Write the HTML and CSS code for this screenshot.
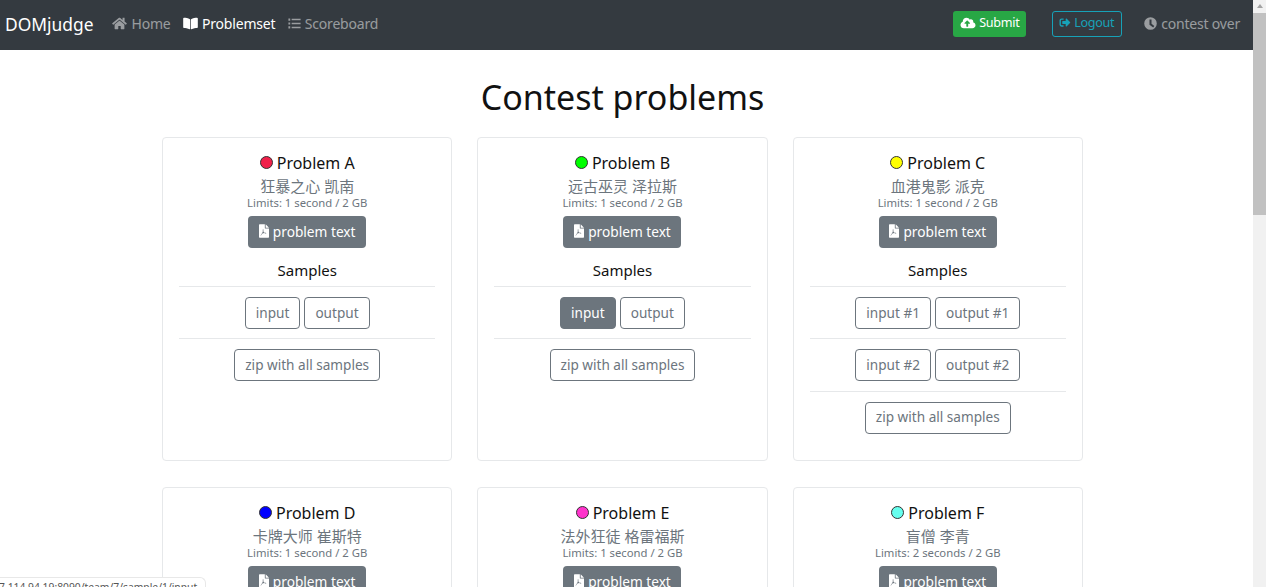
FILE: index.html
```html
<!DOCTYPE html>
<html lang="zh">
<head>
<meta charset="utf-8">
<title>Contest problems</title>
<link rel="stylesheet" href="styles.css">
</head>
<body>
<div class="page">
  <nav class="navbar">
    <a class="brand">DOMjudge</a>
    <ul class="nav-links">
      <li class="nav-link"><svg class="icon i-home" viewBox="0 0 576 512"><path d="M280 148 96 300v164c0 9 7 16 16 16l112 0c9 0 16-7 16-16v-96c0-9 7-16 16-16h64c9 0 16 7 16 16v96c0 9 7 16 16 16l112 0c9 0 16-7 16-16V300L296 148c-4-4-12-4-16 0zM572 251l-84-69V44c0-7-5-12-12-12h-56c-7 0-12 5-12 12v72l-89-74c-18-14-44-14-62 0L4 251c-5 4-6 12-2 17l26 31c4 5 12 6 17 2L280 107c4-4 12-4 16 0l235 194c5 4 13 3 17-2l26-31c4-5 3-13-2-17z"/></svg>Home</li>
      <li class="nav-link active"><svg class="icon i-book" viewBox="0 0 576 512"><path d="M542 32c-55 3-164 15-232 56-5 3-8 8-8 14v362c0 11 13 19 24 14 69-35 170-44 220-47 17-1 30-14 30-30V62c0-18-16-31-34-30zM34 32c55 3 164 15 232 56 5 3 8 8 8 14v362c0 11-13 19-24 14-69-35-170-44-220-47-17-1-30-14-30-30V62c0-18 16-31 34-30z"/></svg>Problemset</li>
      <li class="nav-link"><svg class="icon i-list" viewBox="0 0 512 512"><path d="M16 56h72v88H16zM16 212h72v88H16zM16 368h72v88H16zM144 72h352v56H144zM144 228h352v56H144zM144 384h352v56H144z"/></svg>Scoreboard</li>
    </ul>
    <div class="nav-actions">
      <a class="btn-submit"><svg class="icon i-cloud" viewBox="0 0 640 512"><path d="M537 226c4-10 7-22 7-34 0-53-43-96-96-96-20 0-38 6-53 16C367 64 315 32 256 32c-88 0-160 72-160 160 0 3 0 5 0 8C40 220 0 273 0 336c0 80 64 144 144 144h368c71 0 128-57 128-128 0-62-45-114-103-126zM393 284h-65v112c0 9-7 16-16 16h-48c-9 0-16-7-16-16V284h-65c-14 0-21-17-11-27l105-105c6-6 16-6 22 0l105 105c10 10 3 27-11 27z"/></svg>Submit</a>
      <a class="btn-logout"><svg class="icon i-logout" viewBox="0 0 512 512"><path d="M497 273 329 441c-15 15-41 4-41-17v-96H152c-13 0-24-11-24-24v-96c0-13 11-24 24-24h136V88c0-21 26-32 41-17l168 168c9 10 9 24 0 34zM192 436v-40c0-7-5-12-12-12H96c-18 0-32-14-32-32V160c0-18 14-32 32-32h84c7 0 12-5 12-12V76c0-7-5-12-12-12H96C43 64 0 107 0 160v192c0 53 43 96 96 96h84c7 0 12-5 12-12z"/></svg>Logout</a>
      <span class="contest-state"><svg class="icon i-clock" viewBox="0 0 512 512"><path fill-rule="evenodd" d="M256 8a248 248 0 1 0 0 496 248 248 0 0 0 0-496zM216 100h80v170l110 80-45 62-145-106z"/></svg>contest over</span>
    </div>
  </nav>

  <main class="content">
    <h1 class="page-title">Contest problems</h1>
    <div class="problem-grid">

      <section class="card">
        <h3 class="card-title"><span class="dot dot-a"></span>Problem A</h3>
        <div class="card-name">狂暴之心 凯南</div>
        <div class="limits">Limits: 1 second / 2 GB</div>
        <a class="btn-text"><svg class="icon i-pdf" viewBox="0 0 384 512"><path fill-rule="evenodd" d="M224 0H24C11 0 0 11 0 24v464c0 13 11 24 24 24h336c13 0 24-11 24-24V160H248c-13 0-24-11-24-24zM256 0v128h128zM60 420c30-16 60-70 88-150-6-30-8-60-2-72 8-10 22-6 24 12 1 14-1 34-5 58 12 24 28 44 44 56 26-4 54-4 66 6 10 10 4 22-10 22-18 0-40-8-62-22-26 6-58 16-84 28-18 34-34 62-48 68-8 4-16-2-11-6z"/></svg>problem text</a>
        <h4 class="samples-title">Samples</h4>
        <div class="sample-row"><a class="btn-sample">input</a><a class="btn-sample">output</a></div>
        <div class="sample-row"><a class="btn-sample">zip with all samples</a></div>
      </section>

      <section class="card">
        <h3 class="card-title"><span class="dot dot-b"></span>Problem B</h3>
        <div class="card-name">远古巫灵 泽拉斯</div>
        <div class="limits">Limits: 1 second / 2 GB</div>
        <a class="btn-text"><svg class="icon i-pdf" viewBox="0 0 384 512"><path fill-rule="evenodd" d="M224 0H24C11 0 0 11 0 24v464c0 13 11 24 24 24h336c13 0 24-11 24-24V160H248c-13 0-24-11-24-24zM256 0v128h128zM60 420c30-16 60-70 88-150-6-30-8-60-2-72 8-10 22-6 24 12 1 14-1 34-5 58 12 24 28 44 44 56 26-4 54-4 66 6 10 10 4 22-10 22-18 0-40-8-62-22-26 6-58 16-84 28-18 34-34 62-48 68-8 4-16-2-11-6z"/></svg>problem text</a>
        <h4 class="samples-title">Samples</h4>
        <div class="sample-row"><a class="btn-sample hover">input</a><a class="btn-sample">output</a></div>
        <div class="sample-row"><a class="btn-sample">zip with all samples</a></div>
      </section>

      <section class="card">
        <h3 class="card-title"><span class="dot dot-c"></span>Problem C</h3>
        <div class="card-name">血港鬼影 派克</div>
        <div class="limits">Limits: 1 second / 2 GB</div>
        <a class="btn-text"><svg class="icon i-pdf" viewBox="0 0 384 512"><path fill-rule="evenodd" d="M224 0H24C11 0 0 11 0 24v464c0 13 11 24 24 24h336c13 0 24-11 24-24V160H248c-13 0-24-11-24-24zM256 0v128h128zM60 420c30-16 60-70 88-150-6-30-8-60-2-72 8-10 22-6 24 12 1 14-1 34-5 58 12 24 28 44 44 56 26-4 54-4 66 6 10 10 4 22-10 22-18 0-40-8-62-22-26 6-58 16-84 28-18 34-34 62-48 68-8 4-16-2-11-6z"/></svg>problem text</a>
        <h4 class="samples-title">Samples</h4>
        <div class="sample-row"><a class="btn-sample">input #1</a><a class="btn-sample">output #1</a></div>
        <div class="sample-row"><a class="btn-sample">input #2</a><a class="btn-sample">output #2</a></div>
        <div class="sample-row"><a class="btn-sample">zip with all samples</a></div>
      </section>

      <section class="card">
        <h3 class="card-title"><span class="dot dot-d"></span>Problem D</h3>
        <div class="card-name">卡牌大师 崔斯特</div>
        <div class="limits">Limits: 1 second / 2 GB</div>
        <a class="btn-text"><svg class="icon i-pdf" viewBox="0 0 384 512"><path fill-rule="evenodd" d="M224 0H24C11 0 0 11 0 24v464c0 13 11 24 24 24h336c13 0 24-11 24-24V160H248c-13 0-24-11-24-24zM256 0v128h128zM60 420c30-16 60-70 88-150-6-30-8-60-2-72 8-10 22-6 24 12 1 14-1 34-5 58 12 24 28 44 44 56 26-4 54-4 66 6 10 10 4 22-10 22-18 0-40-8-62-22-26 6-58 16-84 28-18 34-34 62-48 68-8 4-16-2-11-6z"/></svg>problem text</a>
      </section>

      <section class="card">
        <h3 class="card-title"><span class="dot dot-e"></span>Problem E</h3>
        <div class="card-name">法外狂徒 格雷福斯</div>
        <div class="limits">Limits: 1 second / 2 GB</div>
        <a class="btn-text"><svg class="icon i-pdf" viewBox="0 0 384 512"><path fill-rule="evenodd" d="M224 0H24C11 0 0 11 0 24v464c0 13 11 24 24 24h336c13 0 24-11 24-24V160H248c-13 0-24-11-24-24zM256 0v128h128zM60 420c30-16 60-70 88-150-6-30-8-60-2-72 8-10 22-6 24 12 1 14-1 34-5 58 12 24 28 44 44 56 26-4 54-4 66 6 10 10 4 22-10 22-18 0-40-8-62-22-26 6-58 16-84 28-18 34-34 62-48 68-8 4-16-2-11-6z"/></svg>problem text</a>
      </section>

      <section class="card">
        <h3 class="card-title"><span class="dot dot-f"></span>Problem F</h3>
        <div class="card-name">盲僧 李青</div>
        <div class="limits">Limits: 2 seconds / 2 GB</div>
        <a class="btn-text"><svg class="icon i-pdf" viewBox="0 0 384 512"><path fill-rule="evenodd" d="M224 0H24C11 0 0 11 0 24v464c0 13 11 24 24 24h336c13 0 24-11 24-24V160H248c-13 0-24-11-24-24zM256 0v128h128zM60 420c30-16 60-70 88-150-6-30-8-60-2-72 8-10 22-6 24 12 1 14-1 34-5 58 12 24 28 44 44 56 26-4 54-4 66 6 10 10 4 22-10 22-18 0-40-8-62-22-26 6-58 16-84 28-18 34-34 62-48 68-8 4-16-2-11-6z"/></svg>problem text</a>
      </section>

    </div>
  </main>
</div>

<div class="scrollbar"><span class="scroll-arrow"></span><span class="scroll-thumb"></span></div>
<div class="status-bubble"><span class="status-url">7.114.94.19:8090/team/7/sample/1/input</span></div>
</body>
</html>
```

FILE: styles.css
```css
* { box-sizing: border-box; }
html, body { margin: 0; height: 100%; overflow: hidden; background: #fff; }
body {
  font-family: "Noto Sans", "Noto Sans CJK SC", sans-serif;
  color: #212529;
  width: 1266px;
  height: 587px;
  position: relative;
}
.page { width: 1253px; }
.icon { fill: currentColor; flex: none; display: block; }

.navbar {
  height: 50px;
  background: #343a40;
  display: flex;
  align-items: center;
  padding: 0 13px 2px 5px;
  font-size: 14px;
  letter-spacing: -.2px;
}
.brand { color: #fff; font-size: 17.4px; letter-spacing: 0; margin-right: 19px; line-height: 24px; }
.nav-links { display: flex; list-style: none; margin: 0; padding: 0; gap: 12.5px; }
.nav-link { display: flex; align-items: center; gap: 4px; color: rgba(255,255,255,.5); line-height: 20px; padding-bottom: 1px; }
.nav-link.active { color: #fff; }
.i-home { width: 15px; height: 13px; }
.i-book { width: 15px; height: 13px; }
.i-list { width: 13px; height: 13px; }

.nav-actions { margin-left: auto; display: flex; align-items: center; }
.btn-submit, .btn-logout {
  height: 26px;
  display: flex;
  align-items: center;
  gap: 3px;
  border-radius: 3px;
  font-size: 12.6px;
  letter-spacing: -.3px;
  padding-bottom: 3px;
}
.btn-submit { width: 73px; padding-left: 7px; background: #28a745; color: #fff; }
.btn-logout { width: 70px; padding-left: 6px; margin-left: 26px; border: 1px solid #17a2b8; color: #17a2b8; }
.i-cloud { width: 16px; height: 12px; }
.i-logout { width: 12px; height: 11px; }
.contest-state { display: flex; align-items: center; gap: 4px; margin-left: 22px; color: rgba(255,255,255,.5); line-height: 20px; padding-bottom: 1px; }
.i-clock { width: 13px; height: 13px; }

.content { padding-right: 8px; }
.page-title {
  margin: 0;
  height: 87px;
  padding-top: 22px;
  text-align: center;
  font-size: 34px;
  line-height: 51px;
  font-weight: 400;
  color: #111;
}
.problem-grid {
  display: grid;
  grid-template-columns: repeat(3, 290.3px);
  justify-content: center;
  column-gap: 25px;
  row-gap: 26.4px;
}
.card {
  height: 324px;
  border: 1px solid #e6e8ea;
  border-radius: 4px;
  padding: 14px 16px 16px;
  display: flex;
  flex-direction: column;
  align-items: center;
}
.card > * { flex: none; }
.card-title {
  margin: 0;
  height: 21px;
  display: flex;
  align-items: center;
  gap: 4px;
  font-size: 16px;
  font-weight: 400;
  color: #111;
}
.dot { width: 13px; height: 13px; border-radius: 50%; border: 1px solid #333; }
.dot-a { background: #f0204a; }
.dot-b { background: #0f0; }
.dot-c { background: #ff0; }
.dot-d { background: #00f; }
.dot-e { background: #f3c; }
.dot-f { background: #6fe; }
.card-name { margin-top: 4px; height: 19px; line-height: 19px; font-size: 15px; color: #6c757d; }
.limits { height: 13px; line-height: 13px; font-size: 11.3px; color: #6c757d; }
.btn-text {
  margin-top: 7px;
  width: 118px;
  height: 32px;
  padding-bottom: 2px;
  display: flex;
  align-items: center;
  justify-content: center;
  gap: 4px;
  background: #6c757d;
  color: #fff;
  border-radius: 4px;
  font-size: 13.7px;
}
.i-pdf { width: 10px; height: 14px; }
.samples-title { margin: 13px 0 0; height: 19px; line-height: 19px; font-size: 15px; font-weight: 400; color: #111; }
.sample-row {
  width: 100%;
  margin-top: 6px;
  padding: 10px 0 9.4px;
  border-top: 1px solid #e6e8ea;
  display: flex;
  justify-content: center;
  gap: 4px;
}
.sample-row + .sample-row { margin-top: 0; }
.btn-sample {
  height: 32px;
  padding: 0 10px 2px;
  display: flex;
  align-items: center;
  border: 1px solid #6c757d;
  border-radius: 4px;
  color: #6c757d;
  font-size: 13.6px;
  white-space: nowrap;
}
.btn-sample.hover { background: #6c757d; color: #fff; }

.scrollbar {
  position: absolute;
  top: 0;
  right: 0;
  width: 13px;
  height: 587px;
  background: #f1f1f1;
  display: flex;
  flex-direction: column;
  align-items: center;
}
.scroll-arrow {
  margin-top: 4px;
  width: 0;
  height: 0;
  border-left: 3px solid transparent;
  border-right: 3px solid transparent;
  border-bottom: 4px solid #a3a3a3;
}
.scroll-thumb { margin-top: 5px; width: 13px; height: 202px; background: #c1c1c1; }
.status-bubble {
  position: absolute;
  left: 0;
  bottom: 0;
  width: 206px;
  height: 10px;
  padding-top: 4px;
  background: #fff;
  border-top: 1px solid #e8e8e8;
  border-right: 1px solid #e8e8e8;
  border-top-right-radius: 6px;
  font-size: 10.3px;
  line-height: 11px;
  color: #555;
  overflow: hidden;
  white-space: nowrap;
}
.status-url { display: block; margin-left: -1px; }
```
